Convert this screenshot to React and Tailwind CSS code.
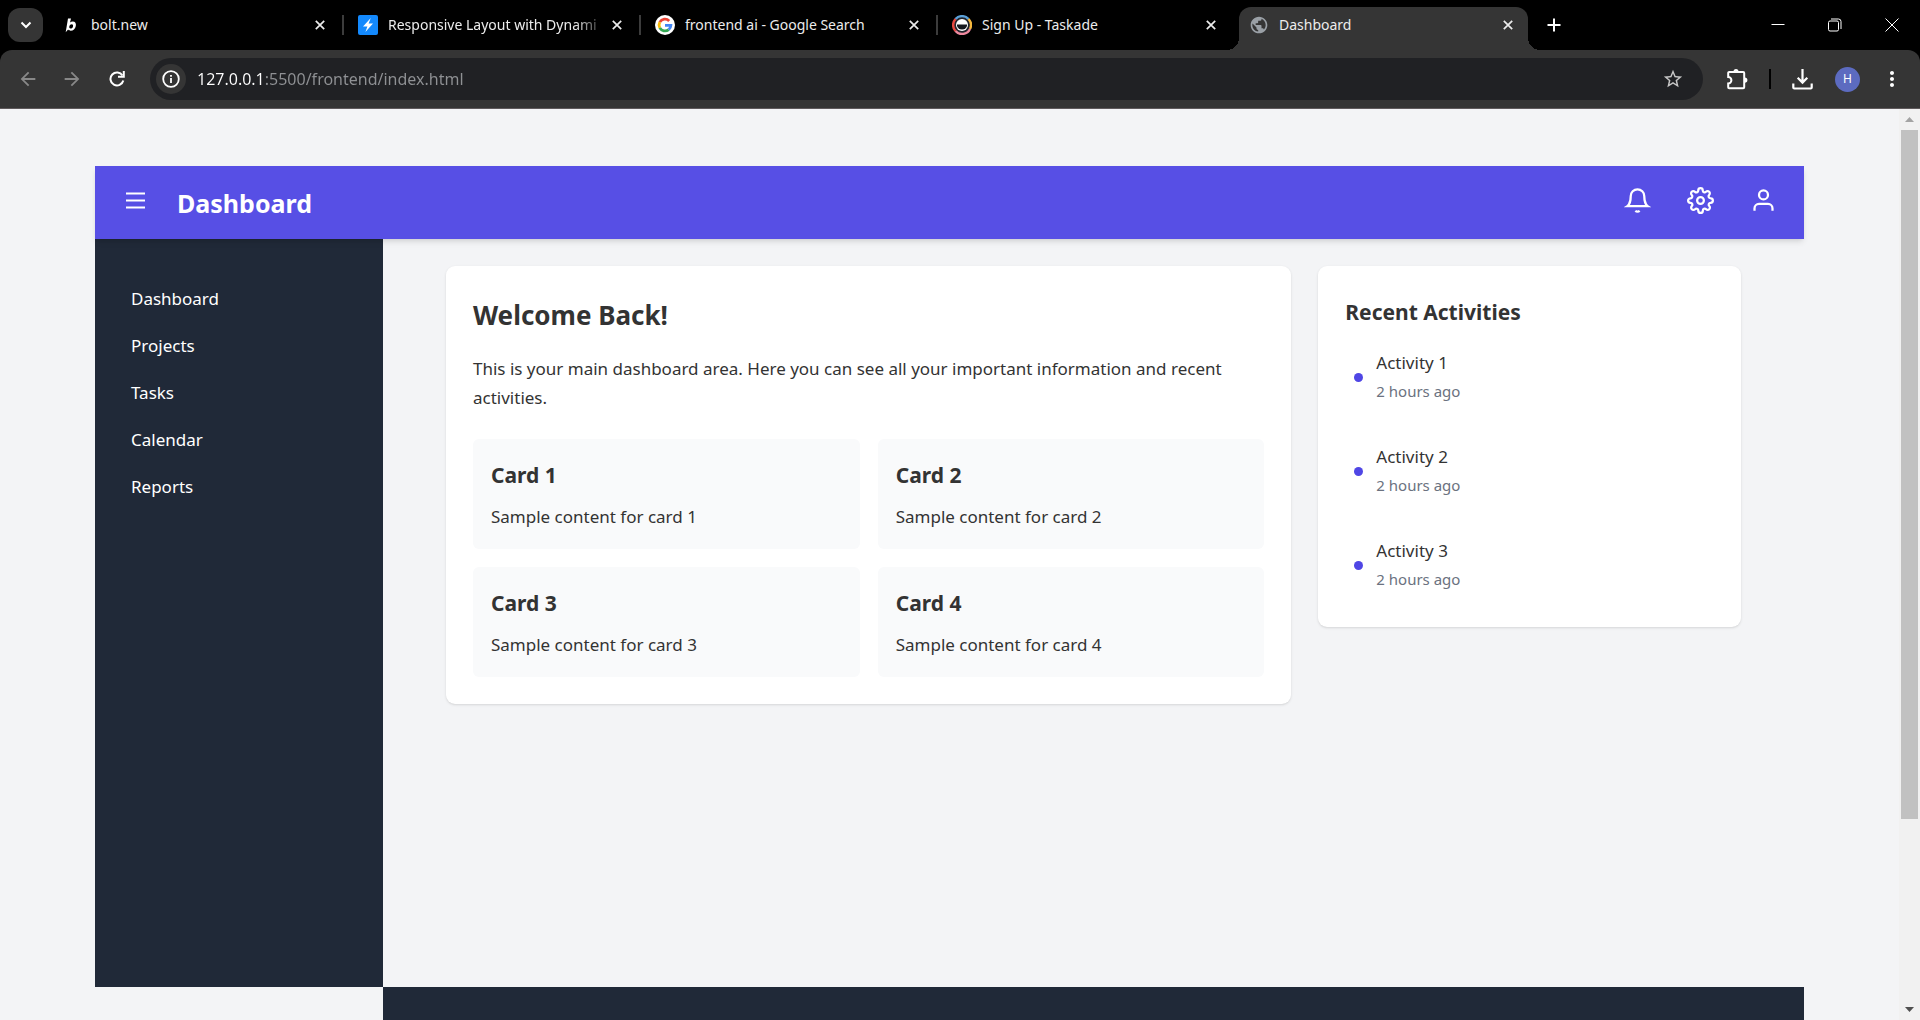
import React from "react";
import { FiBell, FiSettings, FiUser } from "react-icons/fi";
import { MdPublic, MdStarBorder, MdMoreVert, MdArrowBack, MdArrowForward } from "react-icons/md";

const BoltNewIcon = () => (
  <svg viewBox="0 0 20 20" className="size-5" fill="#fff" aria-hidden="true">
    <path fillRule="evenodd" d="M7 3.500h3L9 7.600c.8-.8 1.700-1.100 2.700-1.100 2.500 0 3.700 1.900 3.100 4.500-.6 2.800-2.600 4.800-5.100 4.800-1.200 0-2.100-.4-2.600-1.200L4.700 17.200 7 3.500zm1.300 8.100c-.2 1.300.3 2 1.300 2 1.200 0 2.100-.9 2.400-2.200.3-1.400-.2-2.200-1.300-2.200s-2 .8-2.400 2.400z" />
  </svg>
);

const LightningIcon = () => (
  <svg viewBox="0 0 20 20" className="size-5" aria-hidden="true">
    <rect width="20" height="20" rx="2" fill="#1389fd" />
    <path d="M12.800 3 5 11.400h4.400L7.400 17 15 8.600h-4.400z" fill="#fff" />
  </svg>
);

const GoogleIcon = () => (
  <svg viewBox="0 0 20 20" className="size-5" aria-hidden="true">
    <circle cx="10" cy="10" r="10" fill="#fff" />
    <g fill="none" strokeWidth="2.800">
      <path d="M14.200 5.900A5.900 5.900 0 0 0 4.800 7.200" stroke="#ea4335" />
      <path d="M4.800 7.200a5.900 5.900 0 0 0 0 5.600" stroke="#fbbc05" />
      <path d="M4.800 12.800a5.900 5.900 0 0 0 8.900 1.800" stroke="#34a853" />
      <path d="M13.700 14.600a5.900 5.900 0 0 0 2.200-4.300H10" stroke="#4285f4" />
    </g>
  </svg>
);

const TaskadeIcon = () => (
  <svg viewBox="0 0 20 20" className="size-5" aria-hidden="true">
    <circle cx="10" cy="10" r="10" fill="#20242c" />
    <g fill="none" strokeWidth="2.400">
      <path d="M3.500 4A8.800 8.800 0 0 1 16.500 4" stroke="#5aa0d8" />
      <path d="M16.500 4a8.800 8.800 0 0 1 1.500 10" stroke="#f5b83d" />
      <path d="M18 14a8.800 8.800 0 0 1-14.500 2" stroke="#f08aa0" />
      <path d="M3.500 16a8.800 8.800 0 0 1 0-12" stroke="#e8483f" />
    </g>
    <circle cx="10" cy="10" r="6" fill="#fff" />
    <path d="M5 9.500h10v1a5 4 0 0 1-10 0z" fill="#15181e" />
  </svg>
);

const CloseIcon = () => (
  <svg viewBox="0 0 10 10" className="size-[10px]" fill="none" stroke="currentColor" strokeWidth="1.700" aria-hidden="true">
    <path d="M.8.8l8.400 8.400M9.200.8.800 9.200" />
  </svg>
);

const ReloadIcon = () => (
  <svg viewBox="0 0 16 16" className="size-4" fill="none" stroke="#fff" strokeWidth="2" aria-hidden="true">
    <path d="M13.500 4.500A6.500 6.500 0 1 0 14.300 9.500" />
    <path d="M14.800 0v5.800H9" />
  </svg>
);

const PuzzleIcon = () => (
  <svg viewBox="0 0 22 22" className="size-[22px]" aria-hidden="true">
    <path
      d="M3.200 4h14a1 1 0 0 1 1 1v14.200a1 1 0 0 1-1 1H3.200a1 1 0 0 1-1-1v-3.700a3.200 3.200 0 0 0 0-6.400V5a1 1 0 0 1 1-1z"
      fill="none"
      stroke="#fff"
      strokeWidth="2"
    />
    <path d="M7.500 3.500a2.500 2.500 0 0 1 5 0zM18.800 9.500a2.600 2.600 0 0 1 0 5.200z" fill="#fff" />
  </svg>
);

const DownloadIcon = () => (
  <svg viewBox="0 0 21 21" className="size-[21px]" fill="none" stroke="#fff" strokeWidth="2.200" aria-hidden="true">
    <path d="M10.500 0v13M5.700 8.800l4.800 4.800 4.800-4.800M1.300 14.500v4a1 1 0 0 0 1 1h16.400a1 1 0 0 0 1-1v-4" />
  </svg>
);

const tabs = [
  { title: "bolt.new", icon: <BoltNewIcon />, divider: true },
  { title: "Responsive Layout with Dynami", icon: <LightningIcon />, divider: true, fade: true },
  { title: "frontend ai - Google Search", icon: <GoogleIcon />, divider: true },
  { title: "Sign Up - Taskade", icon: <TaskadeIcon /> },
  { title: "Dashboard", icon: <MdPublic className="size-5 text-[#9aa0a6]" />, active: true },
];

function Tab({ title, icon, divider, fade, active }) {
  return (
    <div className="relative flex h-full min-w-0 flex-[0_1_297px] items-center">
      {active && (
        <div className="absolute inset-x-1 top-[7px] bottom-0 rounded-t-xl bg-[#353535]">
          <span className="absolute bottom-0 -left-3 size-3 bg-[radial-gradient(circle_at_0_0,#000_12px,#353535_12px)]" />
          <span className="absolute -right-3 bottom-0 size-3 bg-[radial-gradient(circle_at_100%_0,#000_12px,#353535_12px)]" />
        </div>
      )}
      <div className="relative flex min-w-0 flex-1 items-center pr-3 pl-[14px]">
        <span className="mr-[10px] shrink-0">{icon}</span>
        <a
          href="#tab"
          className={
            fade
              ? "min-w-0 flex-1 whitespace-nowrap mask-[linear-gradient(to_right,#000_85%,transparent)]"
              : "min-w-0 flex-1 whitespace-nowrap"
          }
        >
          {title}
        </a>
        <button type="button" aria-label={"Close " + title} className="grid size-5 shrink-0 place-items-center">
          <CloseIcon />
        </button>
      </div>
      <span className={divider ? "h-5 w-[2px] bg-[#3c3c3c]" : "h-5 w-[2px]"} />
    </div>
  );
}

function TabStrip() {
  return (
    <div className="flex h-[50px] items-center bg-black text-sm text-[#ececec]">
      <button type="button" aria-label="Search tabs" className="mr-1 ml-2 grid h-[34px] w-[35px] shrink-0 place-items-center rounded-xl bg-[#353535]">
        <svg viewBox="0 0 12 12" className="size-3" fill="none" stroke="#fff" strokeWidth="2" aria-hidden="true">
          <path d="M1.500 3.500 6 8l4.500-4.500" />
        </svg>
      </button>
      {tabs.map((tab) => (
        <Tab key={tab.title} {...tab} />
      ))}
      <button type="button" aria-label="New tab" className="ml-2 grid size-7 shrink-0 place-items-center">
        <svg viewBox="0 0 14 14" className="size-[14px]" stroke="#fff" strokeWidth="2" aria-hidden="true">
          <path d="M7 .5v13M.5 7h13" />
        </svg>
      </button>
      <div className="ml-auto flex h-full shrink-0">
        <button type="button" aria-label="Minimize" className="grid w-[57px] place-items-center">
          <svg viewBox="0 0 14 14" className="size-[14px]" stroke="#fff" aria-hidden="true">
            <path d="M.5 6.500h13" />
          </svg>
        </button>
        <button type="button" aria-label="Restore" className="grid w-[57px] place-items-center">
          <svg viewBox="0 0 14 14" className="size-[14px]" fill="none" stroke="#fff" aria-hidden="true">
            <rect x=".5" y="3" width="10" height="10" rx="1.500" />
            <path d="M3 1h7.500a2.500 2.500 0 0 1 2.500 2.500V11" />
          </svg>
        </button>
        <button type="button" aria-label="Close window" className="grid w-[57px] place-items-center">
          <svg viewBox="0 0 14 14" className="size-[14px]" stroke="#fff" aria-hidden="true">
            <path d="M.5.5l13 13M13.500.5.5 13.500" />
          </svg>
        </button>
      </div>
    </div>
  );
}

function Toolbar() {
  return (
    <div className="bg-black">
      <div className="flex h-[59px] items-center rounded-t-xl border-b border-[#5f5a5c] bg-[#353535] pr-4 pl-[17px] text-white">
        <button type="button" aria-label="Back" className="mr-[22px] text-[#888]">
          <MdArrowBack className="size-[22px]" />
        </button>
        <button type="button" aria-label="Forward" className="mr-[22px] text-[#888]">
          <MdArrowForward className="size-[22px]" />
        </button>
        <button type="button" aria-label="Reload" className="grid size-6 place-items-center">
          <ReloadIcon />
        </button>
        <div className="ml-[21px] flex h-[42px] min-w-0 flex-1 items-center rounded-full bg-[#202124] pr-[19px] pl-[6px]">
          <button type="button" aria-label="Site information" className="grid size-[30px] shrink-0 place-items-center rounded-full bg-[#353535]">
            <svg viewBox="0 0 18 18" className="size-[18px]" fill="none" stroke="#fff" strokeWidth="1.800" aria-hidden="true">
              <circle cx="9" cy="9" r="7.800" />
              <path d="M9 8v5M9 5v1.800" />
            </svg>
          </button>
          <input
            type="text"
            aria-label="Address"
            defaultValue="127.0.0.1:5500/frontend/index.html"
            className="ml-[11px] min-w-0 flex-1 bg-[linear-gradient(to_right,#fff_66px,#8f9194_66px)] bg-clip-text text-base text-transparent outline-none"
          />
          <button type="button" aria-label="Bookmark" className="text-[#c7c7c7]">
            <MdStarBorder className="size-[22px]" />
          </button>
        </div>
        <button type="button" aria-label="Extensions" className="ml-[23px]">
          <PuzzleIcon />
        </button>
        <span className="mx-[21px] h-5 w-[2px] bg-black" />
        <button type="button" aria-label="Downloads">
          <DownloadIcon />
        </button>
        <button type="button" aria-label="Profile" className="mr-5 ml-[22px] grid size-[25px] place-items-center rounded-full bg-[#5c6bc0] text-xs">
          H
        </button>
        <button type="button" aria-label="Menu">
          <MdMoreVert className="size-6" />
        </button>
      </div>
    </div>
  );
}

function Scrollbar() {
  return (
    <div aria-hidden="true" className="flex w-[21px] shrink-0 flex-col items-center bg-[#f1f1f1] px-[2px] py-2">
      <svg viewBox="0 0 9 5" className="h-[5px] w-[9px]" fill="#a3a3a3">
        <path d="M4.500 0 9 5H0z" />
      </svg>
      <div className="mt-2 h-[77%] w-full bg-[#c1c1c1]" />
      <svg viewBox="0 0 9 5" className="mt-auto h-[5px] w-[9px]" fill="#505050">
        <path d="M0 0h9L4.500 5z" />
      </svg>
    </div>
  );
}

function Header() {
  return (
    <header className="relative flex h-[73px] items-center bg-[#574fe5] pr-[27px] pl-[31px] text-white shadow-md">
      <button type="button" aria-label="Toggle menu" className="mb-1">
        <svg viewBox="0 0 19 17" className="h-[17px] w-[19px]" stroke="#fff" strokeWidth="2" aria-hidden="true">
          <path d="M0 1.500h19M0 8.500h19M0 15.500h19" />
        </svg>
      </button>
      <h1 className="mt-0.5 ml-8 text-[25px] font-bold">Dashboard</h1>
      <div className="mb-1 ml-auto flex gap-9 text-[27px]">
        <button type="button" aria-label="Notifications">
          <FiBell strokeLinecap="butt" strokeLinejoin="miter" />
        </button>
        <button type="button" aria-label="Settings">
          <FiSettings strokeLinecap="butt" strokeLinejoin="miter" />
        </button>
        <button type="button" aria-label="Account">
          <FiUser strokeLinecap="butt" strokeLinejoin="miter" />
        </button>
      </div>
    </header>
  );
}

const links = ["Dashboard", "Projects", "Tasks", "Calendar", "Reports"];

function Sidebar() {
  return (
    <nav className="w-72 shrink-0 bg-[#202938] px-9 pt-[45px] text-[17px] leading-[29px] text-white">
      <ul className="flex flex-col gap-[18px]">
        {links.map((link) => (
          <li key={link}>
            <a href={"#" + link.toLowerCase()}>{link}</a>
          </li>
        ))}
      </ul>
    </nav>
  );
}

function Welcome() {
  return (
    <section className="rounded-[9px] bg-white p-[27px] shadow">
      <h2 className="text-[26px] leading-[44px] font-bold">Welcome Back!</h2>
      <p className="mt-[17px] leading-[29px]">
        This is your main dashboard area. Here you can see all your important information and recent activities.
      </p>
      <div className="mt-[27px] grid grid-cols-2 gap-[18px]">
        {[1, 2, 3, 4].map((n) => (
          <article key={n} className="rounded-md bg-[#f9fafb] p-[18px]">
            <h3 className="text-[21px] leading-[36px] font-bold">Card {n}</h3>
            <p className="mt-[9px] leading-[29px]">Sample content for card {n}</p>
          </article>
        ))}
      </div>
    </section>
  );
}

function Activities() {
  return (
    <aside className="rounded-[9px] bg-white p-[27px] pb-6 shadow">
      <h3 className="text-[21px] leading-[38px] font-bold">Recent Activities</h3>
      <ul className="mt-2 flex flex-col gap-[18px]">
        {[1, 2, 3].map((n) => (
          <li key={n} className="flex items-center gap-[13px] p-[9px]">
            <span className="size-[9px] rounded-full bg-[#4f46e5]" />
            <div>
              <p className="leading-[29px]">Activity {n}</p>
              <p className="text-[15px] leading-[29px] text-[#6b7280]">2 hours ago</p>
            </div>
          </li>
        ))}
      </ul>
    </aside>
  );
}

export default function App() {
  return (
    <div className="flex h-screen flex-col overflow-hidden bg-[#f3f4f6] font-['Noto_Sans',sans-serif]">
      <TabStrip />
      <Toolbar />
      <div className="flex min-h-0 flex-1">
        <div className="min-w-0 flex-1 overflow-hidden px-[95px] pt-[57px]">
          <Header />
          <div className="flex min-h-[748px]">
            <Sidebar />
            <main className="grid min-w-0 flex-1 grid-cols-[2fr_1fr] items-start gap-[27px] px-[63px] py-[27px] text-[17px] text-[#333]">
              <Welcome />
              <Activities />
            </main>
          </div>
          <footer className="ml-72 h-20 bg-[#202938]" />
        </div>
        <Scrollbar />
      </div>
    </div>
  );
}
